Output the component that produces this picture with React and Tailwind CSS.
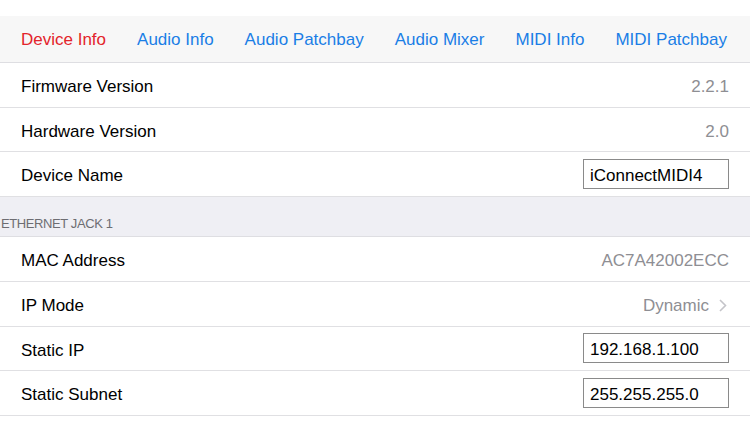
const tabs = ["Device Info", "Audio Info", "Audio Patchbay", "Audio Mixer", "MIDI Info", "MIDI Patchbay"];

const Row = ({ label, children }) => (
  <div className="h-[44.7px] flex items-center justify-between pt-[4px] pl-[21px] pr-[21px] border-b border-[#e0e0e3] bg-white">
    <span className="text-[17px] text-black">{label}</span>
    {children}
  </div>
);

const Value = ({ children }) => <span className="text-[17px] text-[#8e8e93]">{children}</span>;

const Field = ({ value }) => (
  <div className="w-[146px] h-[30px] -mt-[4px] border-[1.5px] border-[#8a8a8a] flex items-center pt-[3px] px-[6px] text-[17px] text-black">
    {value}
  </div>
);

const App = () => {
  return (
    <div className="w-[750px] h-[422px] bg-white overflow-hidden font-['Liberation_Sans',Arial,sans-serif]">
      <div className="h-4" />
      <div className="h-[47px] bg-[#f7f7f7] border-b border-[#dedee2] flex items-center pt-[2px] gap-[31px] px-[21px]">
        {tabs.map((t, i) => (
          <span key={t} className={`text-[17px] whitespace-nowrap ${i === 0 ? "text-[#e3242b]" : "text-[#1a7ee6]"}`}>
            {t}
          </span>
        ))}
      </div>

      <Row label="Firmware Version"><Value>2.2.1</Value></Row>
      <Row label="Hardware Version"><Value>2.0</Value></Row>
      <Row label="Device Name"><Field value="iConnectMIDI4" /></Row>

      <div className="h-[40.2px] bg-[#efeff4] border-b border-[#dedee2] flex items-end pb-[3px] pl-[1px]">
        <span className="text-[13px] text-[#6d6d72] tracking-[-0.4px]">ETHERNET JACK 1</span>
      </div>

      <Row label="MAC Address"><Value>AC7A42002ECC</Value></Row>
      <Row label="IP Mode">
        <div className="flex items-center gap-[10px]">
          <Value>Dynamic</Value>
          <svg width="8" height="13" viewBox="0 0 8 13" className="mr-[2px]">
            <polyline points="1,1 6.5,6.5 1,12" fill="none" stroke="#c4c4c9" strokeWidth="1.6" />
          </svg>
        </div>
      </Row>
      <Row label="Static IP"><Field value="192.168.1.100" /></Row>
      <Row label="Static Subnet"><Field value="255.255.255.0" /></Row>
    </div>
  );
};

export default App;
